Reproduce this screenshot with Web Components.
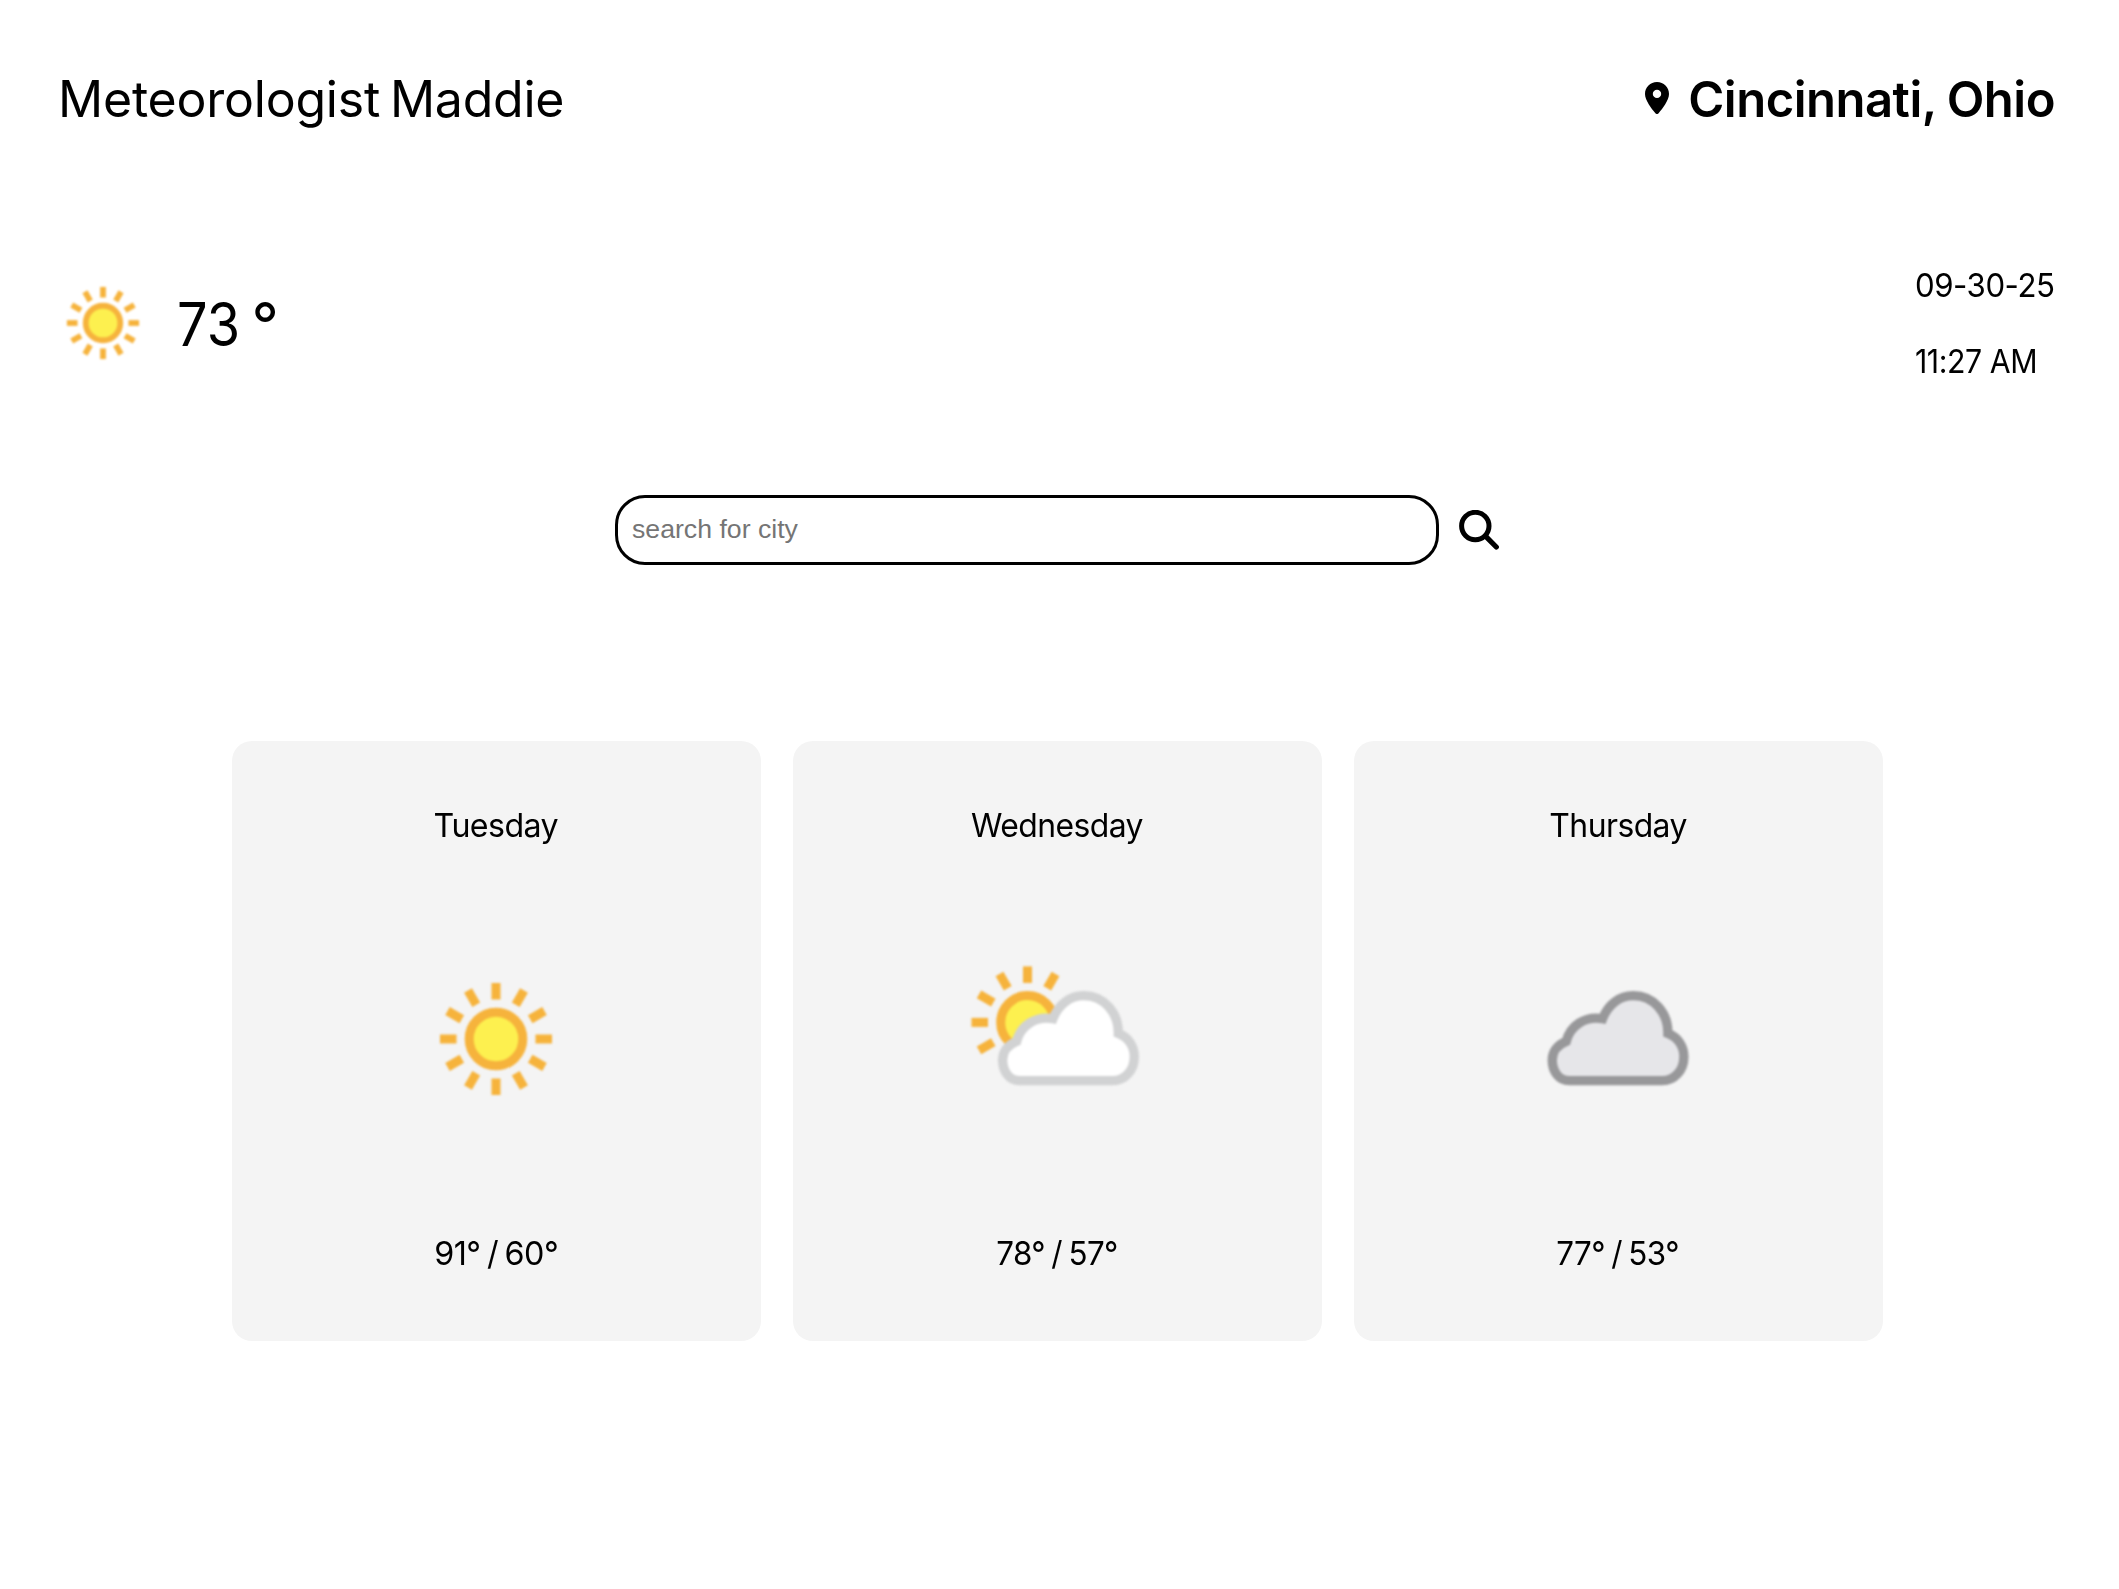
<!DOCTYPE html>
<html lang="en">
<head>
<meta charset="utf-8">
<title>Meteorologist Maddie</title>
<style>
body { margin: 0; background: #fff; color: #000; font-family: Inter, sans-serif; }
</style>
</head>
<body>
<weather-app></weather-app>
<script>
const CLOUD = 'M208 392C177 392 157 364 157 330C157 304 174 284 199 274C211 227 255 197 308 206C325 162 360 137 400 137C460 137 505 187 504 250C535 262 552 290 552 320C552 362 523 392 487 392Z';

function sunShape(angles) {
  return '<circle r="26.8" fill="#fdf04f" stroke="#f6b33c" stroke-width="9"/>' +
    angles.map(a => `<rect x="-4.5" y="-56" width="9" height="16.5" fill="#f6b33c" transform="rotate(${a})"/>`).join('');
}

const ICONS = {
  sunny: sunShape([0, 30, 60, 90, 120, 150, 180, 210, 240, 270, 300, 330]),
  partly: `<g transform="translate(-29.5 -16.6)">${sunShape([240, 270, 300, 330, 0, 30])}</g>
    <g transform="translate(-106.7 -89) scale(.33333)"><path d="${CLOUD}" fill="#fff" stroke="#d1d2d3" stroke-width="28"/></g>`,
  cloudy: `<g transform="translate(-118.1 -89) scale(.33333)"><path d="${CLOUD}" fill="#e6e6e9" stroke="#98989a" stroke-width="28"/></g>`
};

class WeatherIcon extends HTMLElement {
  connectedCallback() {
    this.attachShadow({ mode: 'open' }).innerHTML = `
      <style>
        :host { display: block; }
        svg { display: block; width: 100%; height: 100%; filter: blur(.9px); }
      </style>
      <svg viewBox="-90 -90 180 180">${ICONS[this.getAttribute('kind')]}</svg>`;
  }
}
customElements.define('weather-icon', WeatherIcon);

class FitText extends HTMLElement {
  connectedCallback() {
    this.attachShadow({ mode: 'open' }).innerHTML = `
      <style>
        :host { display: block; white-space: nowrap; transform: scaleX(${this.getAttribute('scale') || 1});
          transform-origin: ${this.getAttribute('origin') || 'center'}; }
      </style><slot></slot>`;
  }
}
customElements.define('fit-text', FitText);

class SiteHeader extends HTMLElement {
  connectedCallback() {
    this.attachShadow({ mode: 'open' }).innerHTML = `
      <style>
        :host { display: flex; justify-content: space-between; align-items: baseline; padding: 65px 64px 0 58px; height: 68px; }
        h1, h2 { margin: 0; line-height: 68px; white-space: nowrap; }
        h1 { font-size: 50px; font-weight: 400; letter-spacing: -.22px; word-spacing: -4px; }
        h2 { font-size: 49px; font-weight: 600; letter-spacing: -.5px; word-spacing: -1px; }
        .place { display: flex; align-items: baseline; gap: 19px; }
        svg { width: 24px; height: 32px; align-self: center; margin-bottom: 4px; }
      </style>
      <h1>Meteorologist Maddie</h1>
      <div class="place">
        <svg viewBox="0 0 24 32"><path fill-rule="evenodd" d="M12 0C5.300 0 0 5.300 0 12C0 18.200 6.500 26.500 10.400 31.300Q12 32.800 13.600 31.300C17.500 26.500 24 18.200 24 12C24 5.300 18.700 0 12 0ZM12 7.700A4.200 4.200 0 1 1 12 16.100A4.200 4.200 0 1 1 12 7.700Z"/></svg>
        <h2>Cincinnati, Ohio</h2>
      </div>`;
  }
}
customElements.define('site-header', SiteHeader);

class CurrentWeather extends HTMLElement {
  connectedCallback() {
    this.attachShadow({ mode: 'open' }).innerHTML = `
      <style>
        :host { display: flex; justify-content: space-between; align-items: center; height: 120px; margin-top: 130px; padding: 0 65px 0 45px; }
        .now { display: flex; align-items: center; gap: 16px; }
        weather-icon { width: 116px; height: 116px; }
        .temp { font-size: 60px; line-height: 80px; word-spacing: -12.5px; padding-top: 2px; }
        .temp fit-text { display: inline-block; }
        .when { display: flex; flex-direction: column; gap: 32px; width: 139px; font-size: 33px; line-height: 44px; letter-spacing: -.5px; }
      </style>
      <div class="now">
        <weather-icon kind="sunny"></weather-icon>
        <div class="temp"><fit-text scale=".9" origin="left">73</fit-text> °</div>
      </div>
      <div class="when">
        <fit-text scale=".945" origin="left">09-30-25</fit-text>
        <fit-text scale=".918" origin="left">11:27 AM</fit-text>
      </div>`;
  }
}
customElements.define('current-weather', CurrentWeather);

class CitySearch extends HTMLElement {
  connectedCallback() {
    this.attachShadow({ mode: 'open' }).innerHTML = `
      <style>
        :host { display: flex; align-items: center; gap: 20px; height: 70px; margin: 112px 0 0 615px; }
        input { box-sizing: border-box; width: 824px; height: 70px; margin: 0; padding: 0 13px 2px 14px; border: 3px solid #000; border-radius: 30px;
          background: #fff; font: 26.67px "Liberation Sans", Arial, sans-serif; outline: 0; }
        input::placeholder { color: #757575; opacity: 1; }
        svg { display: block; width: 40px; height: 40px; }
      </style>
      <input type="text" placeholder="search for city" aria-label="search for city">
      <svg viewBox="0 0 40 40" fill="none" stroke="#000"><circle cx="16.300" cy="16" r="13.700" stroke-width="5"/><path d="M26.500 26.200L37.300 37" stroke-width="5.200" stroke-linecap="round"/></svg>`;
  }
}
customElements.define('city-search', CitySearch);

class ForecastCard extends HTMLElement {
  connectedCallback() {
    this.attachShadow({ mode: 'open' }).innerHTML = `
      <style>
        :host { display: flex; flex-direction: column; align-items: center; justify-content: space-between; box-sizing: border-box;
          flex: 1; height: 600px; padding: 62px 1px 66px 0; border-radius: 20px; background: #f4f4f4; font-size: 33px; line-height: 44px; }
        weather-icon { width: 180px; height: 180px; }
      </style>
      <slot name="day"></slot>
      <weather-icon kind="${this.getAttribute('kind')}"></weather-icon>
      <slot name="range"></slot>`;
  }
}
customElements.define('forecast-card', ForecastCard);

class WeatherApp extends HTMLElement {
  connectedCallback() {
    this.attachShadow({ mode: 'open' }).innerHTML = `
      <style>
        :host { display: flex; flex-direction: column; height: 1589px; overflow: hidden; }
        .cards { display: flex; gap: 32px; width: 1651px; margin: 176px 0 0 232px; }
        [slot=day] { letter-spacing: -.6px; }
        [slot=range] { letter-spacing: -.6px; word-spacing: -2px; }
      </style>
      <site-header></site-header>
      <current-weather></current-weather>
      <city-search></city-search>
      <div class="cards">
        <forecast-card kind="sunny"><fit-text slot="day" scale=".975">Tuesday</fit-text><fit-text slot="range" scale=".98">91° / 60°</fit-text></forecast-card>
        <forecast-card kind="partly"><fit-text slot="day" scale=".967">Wednesday</fit-text><fit-text slot="range" scale=".95">78° / 57°</fit-text></forecast-card>
        <forecast-card kind="cloudy"><fit-text slot="day" scale=".967">Thursday</fit-text><fit-text slot="range" scale=".95">77° / 53°</fit-text></forecast-card>
      </div>`;
  }
}
customElements.define('weather-app', WeatherApp);
</script>
</body>
</html>
